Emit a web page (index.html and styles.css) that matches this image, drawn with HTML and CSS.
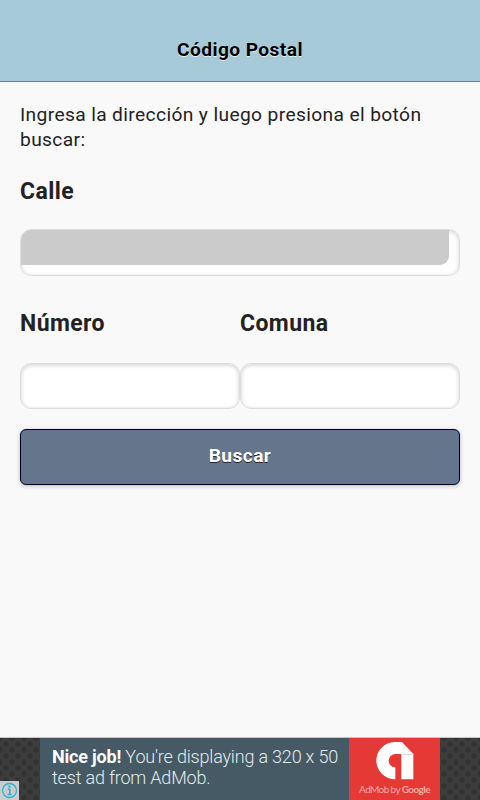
FILE: index.html
```html
<!DOCTYPE html>
<html lang="es">
<head>
<meta charset="UTF-8">
<meta name="viewport" content="width=device-width, initial-scale=1.0">
<title>Código Postal</title>
<link rel="stylesheet" href="styles.css">
</head>
<body>
<header class="header">
  <h1>Código Postal</h1>
</header>

<form class="content">
  <p>Ingresa la dirección y luego presiona el botón buscar:</p>
  <div class="field">
    <label for="calle">Calle</label>
    <div class="input street">
      <input type="text" id="calle">
    </div>
  </div>
  <div class="row">
    <div class="field">
      <label for="numero">Número</label>
      <div class="input"><input type="text" id="numero"></div>
    </div>
    <div class="field">
      <label for="comuna">Comuna</label>
      <div class="input"><input type="text" id="comuna"></div>
    </div>
  </div>
  <button type="button" class="search">Buscar</button>
</form>

<footer class="ad-bar">
  <div class="ad">
    <div class="ad-text"><div><b>Nice job!</b> You're displaying a 320 x 50</div><div>test ad from AdMob.</div></div>
    <div class="ad-logo">
      <svg width="38" height="38" viewBox="0 0 114 114">
        <path fill="#fff" d="M58 112A56 56 0 0 1 56 0H78L112 36V112H76V36H58A20 20 0 0 0 58 76Z"/>
        <path fill="#ddd" d="M76 36H112V39H76Z"/>
      </svg>
      <div class="ad-brand">AdMob by <span>Google</span></div>
    </div>
  </div>
  <div class="ad-info">
    <svg width="17" height="17" viewBox="0 0 17 17" fill="none" stroke="#2bb3cf">
      <circle cx="8.5" cy="8.5" r="7" stroke-width="1.3"/>
      <path stroke-width="2" d="M8.5 3.6V5.6"/>
      <path stroke-width="1.5" d="M6.8 7.3H8.8V12.3M6.6 12.4H10.7"/>
    </svg>
  </div>
</footer>
</body>
</html>
```
FILE: styles.css
```css
* {
  box-sizing: border-box;
}
body {
  margin: 0;
  height: 800px;
  display: flex;
  flex-direction: column;
  overflow: hidden;
  background: #f9f9f9;
  color: #222;
  font-family: Roboto, sans-serif;
}
.header {
  height: 82px;
  padding-top: 37px;
  background: #a7cad9;
  border-bottom: 1px solid #66838f;
  text-align: center;
}
.header h1 {
  margin: 0;
  font-size: 19.2px;
  line-height: 25px;
  letter-spacing: 0.4px;
  color: #000;
  text-shadow: 0 1px 0 #eee;
}
.content {
  flex: 1;
  padding: 20px;
}
.content p {
  margin: 0;
  font-size: 19.2px;
  line-height: 25px;
  letter-spacing: 0.37px;
}
.field {
  flex: 1;
}
.field label {
  display: block;
  margin: 25px 0 22px;
  font-size: 23px;
  font-weight: bold;
  line-height: 30px;
  letter-spacing: 0.4px;
}
.input {
  height: 47px;
  border: 1px solid #ddd;
  border-radius: 11px;
  background: #fff;
  box-shadow: inset 0 1px 4px rgba(0, 0, 0, 0.2);
  overflow: hidden;
}
.input input {
  display: block;
  width: 100%;
  height: 100%;
  padding: 8px;
  border: 0;
  background: transparent;
  outline: none;
}
.street input {
  width: 428px;
  height: 35px;
  background: #cbcbcb;
  border-radius: 0 0 9px 0;
}
.row {
  display: flex;
  margin-top: 33px;
}
.row .field label {
  margin-top: 0;
  margin-bottom: 24px;
}
.row .input {
  height: 46px;
}
.search {
  display: block;
  width: 100%;
  height: 56px;
  margin-top: 20px;
  padding: 0 0 3px;
  border: 1px solid #00002b;
  border-radius: 6px;
  background: #65758b;
  box-shadow: 0 1px 4px rgba(0, 0, 0, 0.25);
  color: #fff;
  font: bold 19.2px Roboto, sans-serif;
  letter-spacing: 0.4px;
  text-shadow: 0 1px 0 #222;
}
.ad-bar {
  position: relative;
  height: 63px;
  padding: 0 40px;
  border-top: 1px solid #c4c4c6;
  background-color: #3d3d3d;
  background-image:
    radial-gradient(circle, #333 2px, transparent 3.5px),
    radial-gradient(circle, #333 2px, transparent 3.5px);
  background-size: 12px 12px;
  background-position: 0 0, 6px 6px;
}
.ad {
  display: flex;
  height: 100%;
  background: #455a64;
}
.ad-text {
  flex: 1;
  padding: 8px 0 0 12px;
  font-size: 18px;
  font-weight: 300;
  line-height: 21px;
  letter-spacing: -0.19px;
  color: #e6eaec;
  white-space: nowrap;
}
.ad-text b {
  font-weight: bold;
  color: #fff;
}
.ad-logo {
  width: 91px;
  padding-top: 4px;
  background: #e53935;
  text-align: center;
}
.ad-logo svg {
  display: block;
  margin: 0 auto 0 27px;
}
.ad-brand {
  margin-top: 2px;
  font: 10px/14px Lato, sans-serif;
  letter-spacing: -0.6px;
  color: #f6aaa7;
  white-space: nowrap;
}
.ad-brand span {
  font-weight: bold;
}
.ad-info {
  position: absolute;
  left: 0;
  bottom: 0;
  width: 19px;
  height: 19px;
  padding: 1px;
  background: #ccc;
}
.ad-info svg {
  display: block;
}
```
